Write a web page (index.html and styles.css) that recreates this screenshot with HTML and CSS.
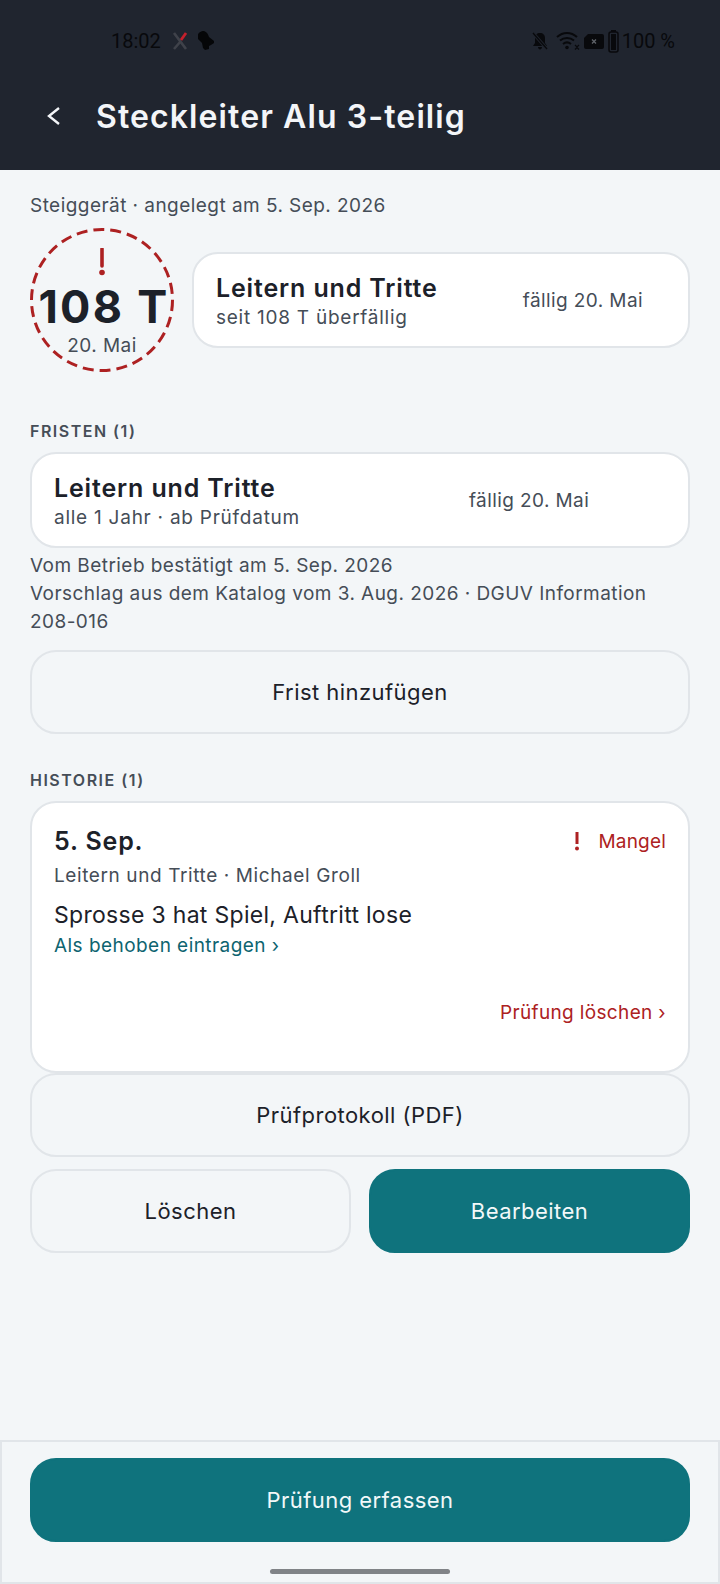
FILE: index.html
```html
<!DOCTYPE html>
<html lang="de">
<head>
  <meta charset="UTF-8" />
  <meta name="viewport" content="width=device-width, initial-scale=1.0">
  <title>Steckleiter Alu 3-teilig</title>
  <link rel="stylesheet" href="styles.css">
</head>
<body>
  <div class="screen">
    <header class="top">
      <div class="statusbar">
        <div class="status-left">
          <span class="status-time">18:02</span>
          <svg class="status-x" width="16" height="18" viewBox="0 0 16 18">
            <path d="M2 1l12 16M9 9L2 17" stroke="#3f424a" stroke-width="2.6" fill="none"/>
            <path d="M9 8l5-7" stroke="#c4202c" stroke-width="2.8" fill="none"/>
          </svg>
          <svg class="status-app" width="18" height="20" viewBox="0 0 18 20">
            <path d="M1 4c0-2 3-4 6-4 3 1 4 3 5 6l5 4v2l-3 2-2 1v3l-4 1-2-2-1-5-4-4z" fill="#050608"/>
          </svg>
        </div>
        <div class="status-right">
          <svg class="status-bell" width="16" height="18" viewBox="0 0 16 18">
            <path d="M8 1C5 1 3 3 3 6v5l-2 3h14l-2-3V6c0-3-2-5-5-5zM6 15h4c0 1.500-1 2.500-2 2.500S6 16.500 6 15z" fill="#08090c"/>
            <path d="M1 1l14 16" stroke="#20252f" stroke-width="3.200"/>
            <path d="M1 1l14 16" stroke="#08090c" stroke-width="1.300"/>
          </svg>
          <svg class="status-wifi" width="24" height="20" viewBox="0 0 24 20" fill="none" stroke="#08090c" stroke-width="2">
            <path d="M1 6c6-5.500 14-5.500 20 0M4 9.500c4-3.500 10-3.500 14 0M7 13c2.500-2 5.500-2 8 0"/>
            <circle cx="11" cy="16.500" r="1.800" fill="#08090c" stroke="none"/>
            <path d="M19 14l2 2 2-2M19 18.500l2-2 2 2" stroke-width="1.200"/>
          </svg>
          <svg class="status-sim" width="20" height="15" viewBox="0 0 20 15">
            <path d="M4 0h14a2 2 0 0 1 2 2v11a2 2 0 0 1-2 2H2a2 2 0 0 1-2-2V4z" fill="#08090c"/>
            <path d="M8 5.500l4 4M12 5.500l-4 4" stroke="#5f636a" stroke-width="1.300"/>
          </svg>
          <svg class="status-battery" width="11" height="23" viewBox="0 0 11 23">
            <rect x="3" y="0" width="5" height="2" fill="#08090c"/>
            <rect x="1" y="2" width="9" height="20" rx="2" fill="none" stroke="#08090c" stroke-width="1.500"/>
            <rect x="3" y="4" width="5" height="16" fill="#08090c"/>
          </svg>
          <span class="status-batt">100 %</span>
        </div>
      </div>
      <div class="titlebar">
        <svg class="back" width="18" height="24" viewBox="0 0 18 24">
          <path d="M14 4L4 12l10 8" fill="none" stroke="#f3f5f8" stroke-width="2.400"/>
        </svg>
        <h1>Steckleiter Alu 3-teilig</h1>
      </div>
    </header>

    <main class="content">
      <p class="meta">Steiggerät · angelegt am 5. Sep. 2026</p>

      <div class="summary">
        <div class="ring">
          <svg class="ring-line" width="144" height="144" viewBox="0 0 144 144">
            <circle cx="72" cy="72" r="70.500" fill="none" stroke="#ad2122" stroke-width="3" stroke-dasharray="11 6"/>
          </svg>
          <svg class="bang" width="8" height="28" viewBox="0 0 8 28">
            <path d="M4 1v17" stroke="#ad2122" stroke-width="3.600" stroke-linecap="round"/>
            <circle cx="4" cy="24.500" r="2.800" fill="#ad2122"/>
          </svg>
          <div class="ring-value">108 T</div>
          <div class="ring-date">20. Mai</div>
        </div>
        <div class="card row-card grow">
          <div class="card-text">
            <div class="card-title">Leitern und Tritte</div>
            <div class="card-sub">seit 108 T überfällig</div>
          </div>
          <div class="due due-summary">fällig 20. Mai</div>
        </div>
      </div>

      <h2 class="section-label first">FRISTEN (1)</h2>
      <div class="card row-card">
        <div class="card-text">
          <div class="card-title">Leitern und Tritte</div>
          <div class="card-sub">alle 1 Jahr · ab Prüfdatum</div>
        </div>
        <div class="due due-list">fällig 20. Mai</div>
      </div>
      <p class="note">Vom Betrieb bestätigt am 5. Sep. 2026<br>Vorschlag aus dem Katalog vom 3. Aug. 2026 · DGUV Information 208-016</p>
      <button class="btn">Frist hinzufügen</button>

      <h2 class="section-label">HISTORIE (1)</h2>
      <div class="card history">
        <div class="history-head">
          <div class="card-title small">5. Sep.</div>
          <div class="defect">
            <svg width="8" height="20" viewBox="0 0 8 20">
              <path d="M4 1v12" stroke="#ad2122" stroke-width="3"/>
              <circle cx="4" cy="17.500" r="2" fill="#ad2122"/>
            </svg>
            <span>Mangel</span>
          </div>
        </div>
        <div class="history-who">Leitern und Tritte · Michael Groll</div>
        <div class="history-text">Sprosse 3 hat Spiel, Auftritt lose</div>
        <a class="link-fix">Als behoben eintragen ›</a>
        <a class="link-delete">Prüfung löschen ›</a>
      </div>
      <button class="btn">Prüfprotokoll (PDF)</button>
      <div class="btn-row">
        <button class="btn">Löschen</button>
        <button class="btn primary">Bearbeiten</button>
      </div>
    </main>

    <footer class="bottom">
      <button class="btn primary">Prüfung erfassen</button>
      <div class="homebar"></div>
    </footer>
  </div>
</body>
</html>
```

FILE: styles.css
```css
* {
  box-sizing: border-box;
}

html, body {
  margin: 0;
  padding: 0;
  background-color: #f3f6f8;
  font-family: Inter, "Open Sans", sans-serif;
  color: #1c2129;
}

.screen {
  display: flex;
  flex-direction: column;
  width: 720px;
  height: 1584px;
  overflow: hidden;
}

/* Kopf */
.top {
  height: 170px;
  background-color: #20252f;
  padding-top: 28px;
}

.statusbar {
  display: flex;
  justify-content: space-between;
  align-items: center;
  height: 26px;
  padding: 0 45px 0 111px;
  font-family: Roboto, sans-serif;
  font-size: 20px;
  color: #08090c;
}

.status-left, .status-right {
  display: flex;
  align-items: center;
}

.status-x {
  margin-left: 11px;
}

.status-app {
  margin-left: 9px;
}

.status-wifi {
  margin-left: 8px;
}

.status-sim {
  margin-left: 4px;
}

.status-battery {
  margin-left: 4px;
}

.status-batt {
  margin-left: 3px;
}

.titlebar {
  display: flex;
  align-items: center;
  margin-top: 27px;
  padding-left: 45px;
  height: 70px;
}

.back {
  margin-right: 33px;
}

h1 {
  margin: 0;
  font-size: 32px;
  font-weight: 600;
  color: #f3f5f8;
  letter-spacing: 1.1px;
}

/* Inhalt */
.content {
  flex: 1;
  padding: 23px 30px 0;
}

.meta, .note {
  margin: 0;
  font-size: 19px;
  line-height: 28px;
  color: #454d57;
  letter-spacing: 0.45px;
}

.meta {
  line-height: 26px;
}

.summary {
  display: flex;
  align-items: center;
  gap: 18px;
  margin-top: 9px;
}

.ring {
  position: relative;
  display: flex;
  flex-direction: column;
  align-items: center;
  flex: none;
  width: 144px;
  height: 144px;
  padding-top: 20px;
}

.ring-line {
  position: absolute;
  top: 0;
  left: 0;
}

.bang {
  display: block;
  margin-bottom: 5px;
}

.ring-value {
  padding-left: 4px;
  font-size: 45px;
  font-weight: 700;
  line-height: 52px;
  white-space: nowrap;
  letter-spacing: 2.3px;
}

.ring-date {
  font-size: 19px;
  line-height: 22px;
  color: #454d57;
  margin-top: 2px;
  letter-spacing: 0.45px;
}

.card {
  background-color: #fff;
  border: 2px solid #e1e5e9;
  border-radius: 26px;
}

.row-card {
  display: flex;
  align-items: center;
  height: 96px;
  padding: 0 22px;
}

.grow {
  flex: 1;
}

.card-text {
  padding-top: 4px;
}

.card-title {
  font-size: 25px;
  font-weight: 600;
  line-height: 30px;
  letter-spacing: 0.85px;
}

.card-sub {
  margin-top: 2px;
  font-size: 19px;
  line-height: 26px;
  color: #454d57;
  letter-spacing: 0.75px;
}

.due {
  font-size: 19px;
  color: #454d57;
  letter-spacing: 0.4px;
}

.due-summary {
  margin-left: auto;
  margin-right: 23px;
}

.due-list {
  margin-left: 169px;
}

.section-label {
  margin: 36px 0 11px;
  font-size: 16px;
  line-height: 20px;
  font-weight: 600;
  color: #454d57;
  letter-spacing: 1.5px;
}

.section-label.first {
  margin-top: 49px;
}

.note {
  margin-top: 4px;
}

.btn {
  display: block;
  width: 100%;
  height: 84px;
  margin: 0;
  background-color: #f3f6f8;
  border: 2px solid #e1e5e9;
  border-radius: 26px;
  font-family: inherit;
  font-size: 22px;
  font-weight: 430;
  color: #1c2129;
  letter-spacing: 0.45px;
}

.note + .btn {
  margin-top: 14px;
}

.btn.primary {
  background-color: #0f737d;
  border-color: #0f737d;
  color: #f2f8f9;
}

.history {
  display: flex;
  flex-direction: column;
  height: 272px;
  padding: 20px 22px 0;
}

.history-head {
  display: flex;
  justify-content: space-between;
  align-items: center;
  height: 36px;
}

.defect {
  display: flex;
  align-items: center;
  gap: 17px;
  font-size: 19px;
  color: #ad2122;
  letter-spacing: 0.2px;
}

.history-who {
  margin-top: 3px;
  font-size: 19px;
  line-height: 28px;
  color: #454d57;
  letter-spacing: 0.6px;
}

.history-text {
  margin-top: 10px;
  font-size: 23px;
  line-height: 30px;
  letter-spacing: 0.3px;
}

.link-fix {
  margin-top: 2px;
  font-size: 19px;
  line-height: 28px;
  color: #0d6470;
  letter-spacing: 0.45px;
}

.link-delete {
  margin-top: 39px;
  text-align: right;
  font-size: 19px;
  line-height: 28px;
  color: #ad2122;
  letter-spacing: 0.35px;
}

.btn-row {
  display: flex;
  gap: 18px;
  margin-top: 12px;
}

/* Fuss */
.bottom {
  height: 144px;
  border: 2px solid #e1e5e9;
  padding: 16px 28px 0;
}

.homebar {
  width: 180px;
  height: 5px;
  margin: 27px auto 0;
  border-radius: 3px;
  background-color: #808387;
}
```
